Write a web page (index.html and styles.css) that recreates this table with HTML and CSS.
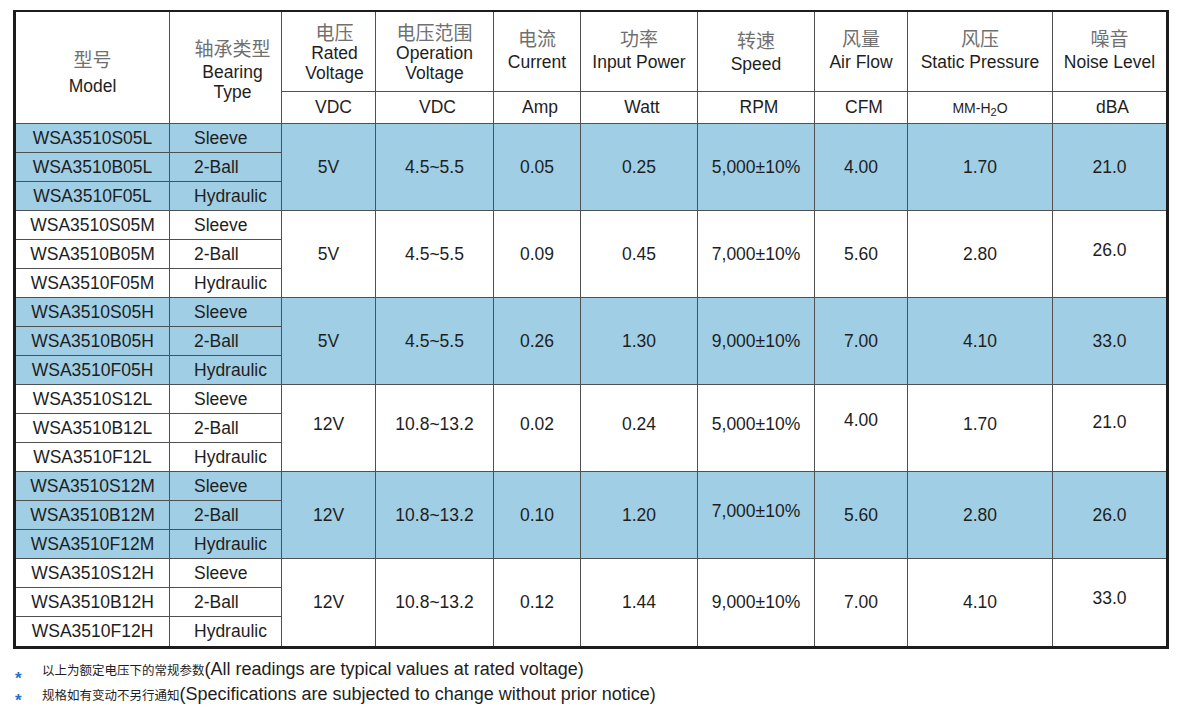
FILE: index.html
```html
<!DOCTYPE html>
<html lang="zh-CN">
<head>
<meta charset="utf-8">
<title>WSA3510 Fan Specifications</title>
<link rel="stylesheet" href="styles.css">
</head>
<body>
<table class="spec">
  <colgroup>
    <col class="c-model"><col class="c-bearing"><col class="c-rated"><col class="c-op"><col class="c-cur">
    <col class="c-pow"><col class="c-speed"><col class="c-air"><col class="c-stat"><col class="c-noise">
  </colgroup>
  <thead>
    <tr class="hdr">
      <th rowspan="2" class="h-model"><span class="zh">型号</span><span class="en">Model</span></th>
      <th rowspan="2" class="h-bearing"><span class="zh">轴承类型</span><span class="en first">Bearing</span><span class="en">Type</span></th>
      <th class="h-rated"><span class="zh">电压</span><span class="en">Rated</span><span class="en">Voltage</span></th>
      <th><span class="zh">电压范围</span><span class="en">Operation</span><span class="en">Voltage</span></th>
      <th class="h-two"><span class="zh">电流</span><span class="en">Current</span></th>
      <th class="h-two"><span class="zh">功率</span><span class="en">Input Power</span></th>
      <th class="h-two h-low"><span class="zh">转速</span><span class="en">Speed</span></th>
      <th class="h-two"><span class="zh">风量</span><span class="en">Air Flow</span></th>
      <th class="h-two"><span class="zh">风压</span><span class="en">Static Pressure</span></th>
      <th class="h-two end"><span class="zh">噪音</span><span class="en">Noise Level</span></th>
    </tr>
    <tr class="units">
      <td class="u-rated">VDC</td>
      <td>VDC</td>
      <td>Amp</td>
      <td>Watt</td>
      <td>RPM</td>
      <td>CFM</td>
      <td class="u-small">MM-H<sub>2</sub>O</td>
      <td class="end">dBA</td>
    </tr>
  </thead>

  <tbody class="grp blue">
    <tr>
      <td class="model">WSA3510S05L</td><td class="bearing">Sleeve</td>
      <td rowspan="3">5V</td><td rowspan="3">4.5~5.5</td><td rowspan="3">0.05</td><td rowspan="3">0.25</td>
      <td rowspan="3">5,000±10%</td><td rowspan="3">4.00</td><td rowspan="3">1.70</td><td rowspan="3" class="end">21.0</td>
    </tr>
    <tr><td class="model">WSA3510B05L</td><td class="bearing">2-Ball</td></tr>
    <tr><td class="model">WSA3510F05L</td><td class="bearing">Hydraulic</td></tr>
  </tbody>

  <tbody class="grp">
    <tr>
      <td class="model">WSA3510S05M</td><td class="bearing">Sleeve</td>
      <td rowspan="3">5V</td><td rowspan="3">4.5~5.5</td><td rowspan="3">0.09</td><td rowspan="3">0.45</td>
      <td rowspan="3">7,000±10%</td><td rowspan="3">5.60</td><td rowspan="3">2.80</td><td rowspan="3" class="end lift-4">26.0</td>
    </tr>
    <tr><td class="model">WSA3510B05M</td><td class="bearing">2-Ball</td></tr>
    <tr><td class="model">WSA3510F05M</td><td class="bearing">Hydraulic</td></tr>
  </tbody>

  <tbody class="grp blue">
    <tr>
      <td class="model">WSA3510S05H</td><td class="bearing">Sleeve</td>
      <td rowspan="3">5V</td><td rowspan="3">4.5~5.5</td><td rowspan="3">0.26</td><td rowspan="3">1.30</td>
      <td rowspan="3">9,000±10%</td><td rowspan="3">7.00</td><td rowspan="3">4.10</td><td rowspan="3" class="end">33.0</td>
    </tr>
    <tr><td class="model">WSA3510B05H</td><td class="bearing">2-Ball</td></tr>
    <tr><td class="model">WSA3510F05H</td><td class="bearing">Hydraulic</td></tr>
  </tbody>

  <tbody class="grp">
    <tr>
      <td class="model">WSA3510S12L</td><td class="bearing">Sleeve</td>
      <td rowspan="3" class="lift-4">12V</td><td rowspan="3" class="lift-4">10.8~13.2</td><td rowspan="3" class="lift-4">0.02</td><td rowspan="3" class="lift-4">0.24</td>
      <td rowspan="3" class="lift-4">5,000±10%</td><td rowspan="3" class="lift-8">4.00</td><td rowspan="3" class="lift-4">1.70</td><td rowspan="3" class="end lift-6">21.0</td>
    </tr>
    <tr><td class="model">WSA3510B12L</td><td class="bearing">2-Ball</td></tr>
    <tr><td class="model">WSA3510F12L</td><td class="bearing">Hydraulic</td></tr>
  </tbody>

  <tbody class="grp blue">
    <tr>
      <td class="model">WSA3510S12M</td><td class="bearing">Sleeve</td>
      <td rowspan="3">12V</td><td rowspan="3">10.8~13.2</td><td rowspan="3">0.10</td><td rowspan="3">1.20</td>
      <td rowspan="3" class="lift-4">7,000±10%</td><td rowspan="3">5.60</td><td rowspan="3">2.80</td><td rowspan="3" class="end">26.0</td>
    </tr>
    <tr><td class="model">WSA3510B12M</td><td class="bearing">2-Ball</td></tr>
    <tr><td class="model">WSA3510F12M</td><td class="bearing">Hydraulic</td></tr>
  </tbody>

  <tbody class="grp">
    <tr>
      <td class="model">WSA3510S12H</td><td class="bearing">Sleeve</td>
      <td rowspan="3">12V</td><td rowspan="3">10.8~13.2</td><td rowspan="3">0.12</td><td rowspan="3">1.44</td>
      <td rowspan="3">9,000±10%</td><td rowspan="3">7.00</td><td rowspan="3">4.10</td><td rowspan="3" class="end lift-4">33.0</td>
    </tr>
    <tr><td class="model">WSA3510B12H</td><td class="bearing">2-Ball</td></tr>
    <tr><td class="model">WSA3510F12H</td><td class="bearing">Hydraulic</td></tr>
  </tbody>
</table>

<div class="notes">
  <p class="note"><span class="star">*</span><span class="zh-s">以上为额定电压下的常规参数</span>(All readings are typical values at rated voltage)</p>
  <p class="note"><span class="star star-2">*</span><span class="zh-s">规格如有变动不另行通知</span>(Specifications are subjected to change without prior notice)</p>
</div>
</body>
</html>
```

FILE: styles.css
```css
html, body {
  margin: 0;
  padding: 0;
  background: #ffffff;
}

body {
  padding: 10px 0 0 13px;
  font-family: "Liberation Sans", Arial, "Noto Sans CJK SC", sans-serif;
  color: #1e1e1e;
}

.spec {
  border-collapse: separate;
  border-spacing: 0;
  table-layout: fixed;
  width: 1156px;
  border-style: solid;
  border-color: #1c1c1c;
  border-width: 2px 3px 3px 3px;
  font-size: 17.5px;
}

.c-model { width: 154px; }
.c-bearing { width: 112px; }
.c-rated { width: 94px; }
.c-op { width: 118px; }
.c-cur { width: 87px; }
.c-pow { width: 117px; }
.c-speed { width: 117px; }
.c-air { width: 93px; }
.c-stat { width: 145px; }
.c-noise { width: 113px; }

.spec th,
.spec td {
  padding: 0;
  border-right: 1px solid #505050;
  border-bottom: 1px solid #505050;
  text-align: center;
  vertical-align: middle;
  font-weight: normal;
  white-space: nowrap;
}

.spec .end {
  border-right: none;
}

.spec .grp:last-child tr:last-child td,
.spec .grp:last-child td[rowspan] {
  border-bottom: none;
}

/* header */
.hdr {
  height: 80px;
}

.units {
  height: 32px;
}

.zh {
  display: block;
  font-family: "Noto Sans CJK SC", sans-serif;
  font-weight: 400;
  font-size: 19px;
  line-height: 23px;
  color: #707070;
}

.en {
  display: block;
  font-size: 17.5px;
  line-height: 20px;
  color: #1e1e1e;
}

.h-model {
  padding-top: 8px !important;
}

.h-model .zh {
  line-height: 24px;
}

.h-model .en {
  padding-top: 5px;
}

.h-bearing {
  padding-left: 14px !important;
  padding-top: 3px !important;
}

.h-bearing .en.first {
  padding-top: 3px;
}

.h-rated {
  padding-left: 12px !important;
}

.h-two {
  padding-bottom: 4px !important;
}

.h-two .zh {
  line-height: 22px;
}

.h-two .en {
  padding-top: 3px;
}

.h-two.h-low {
  padding-bottom: 0 !important;
}

.units td {
  padding-left: 6px;
  font-size: 17.5px;
}

.units .u-rated {
  padding-left: 10px;
}

.units .u-small {
  font-size: 14px;
  padding-left: 0;
}

.u-small sub {
  font-size: 11px;
  vertical-align: -3px;
  line-height: 0;
}

/* body rows */
.grp tr {
  height: 29px;
}

.grp.blue td {
  background: #a0cee4;
}

.bearing {
  text-align: left !important;
  padding-left: 24px !important;
}

.lift-4 { padding-bottom: 8px !important; }
.lift-6 { padding-bottom: 12px !important; }
.lift-8 { padding-bottom: 16px !important; }

/* footnotes */
.notes {
  margin-top: 8px;
  padding-left: 2px;
}

.note {
  margin: 0;
  font-size: 18px;
  line-height: 24px;
  color: #1e1e1e;
  white-space: nowrap;
}

.star {
  display: inline-block;
  width: 27px;
  color: #2a72c4;
  font-weight: bold;
  font-size: 17px;
  line-height: 0;
  transform: translateY(9px);
}

.star.star-2 {
  transform: translateY(6px);
}

.zh-s {
  font-family: "Noto Sans CJK SC", sans-serif;
  font-size: 12.5px;
}
```
